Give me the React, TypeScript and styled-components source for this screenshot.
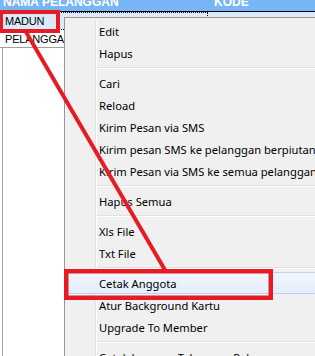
import React from 'react';
import styled, { createGlobalStyle } from 'styled-components';

const GlobalStyle = createGlobalStyle`
  html, body {
    margin: 0;
    padding: 0;
    background: #ffffff;
    overflow: hidden;
  }
`;

type MenuEntry = { kind: 'item'; label: string; active?: boolean } | { kind: 'sep' };

const menuEntries: MenuEntry[] = [
  { kind: 'item', label: 'Edit' },
  { kind: 'item', label: 'Hapus' },
  { kind: 'sep' },
  { kind: 'item', label: 'Cari' },
  { kind: 'item', label: 'Reload' },
  { kind: 'item', label: 'Kirim Pesan via SMS' },
  { kind: 'item', label: 'Kirim pesan SMS ke pelanggan berpiutang' },
  { kind: 'item', label: 'Kirim Pesan via SMS ke semua pelanggan' },
  { kind: 'sep' },
  { kind: 'item', label: 'Hapus Semua' },
  { kind: 'sep' },
  { kind: 'item', label: 'Xls File' },
  { kind: 'item', label: 'Txt File' },
  { kind: 'sep' },
  { kind: 'item', label: 'Cetak Anggota', active: true },
  { kind: 'item', label: 'Atur Background Kartu' },
  { kind: 'item', label: 'Upgrade To Member' },
  { kind: 'sep' },
  { kind: 'item', label: 'Cetak Laporan Tabungan Pelanggan' },
];

const Screen = styled.div`
  position: relative;
  width: 315px;
  height: 356px;
  overflow: hidden;
  display: flex;
  flex-direction: column;
  font-family: 'Liberation Sans', Arial, sans-serif;
`;

const Header = styled.div`
  display: flex;
  align-items: flex-start;
  height: 11px;
  overflow: hidden;
  background: #78b5f5;
  border-bottom: 1px solid #000000;
`;

const HeaderCell = styled.div<{ $width?: number }>`
  flex: ${({ $width }) => ($width ? `0 0 ${$width}px` : '1')};
  margin-top: -3px;
  padding-left: 3px;
  color: #ffffff;
  font-size: 12px;
  font-weight: bold;
  line-height: 11px;
  white-space: nowrap;
`;

const Row = styled.div<{ $selected?: boolean; $height: number }>`
  display: flex;
  height: ${({ $height }) => $height}px;
  background: ${({ $selected }) => ($selected ? '#dce9f9' : '#ffffff')};
`;

const LastRow = styled(Row)`
  border-bottom: 1px solid #a0a0a0;
`;

const Cell = styled.div<{ $width?: number; $focused?: boolean }>`
  flex: ${({ $width }) => ($width ? `0 0 ${$width}px` : '1')};
  box-sizing: border-box;
  padding-left: 5px;
  font-size: 11px;
  letter-spacing: -0.2px;
  line-height: 18px;
  color: #000000;
  white-space: nowrap;
  overflow: hidden;
  outline: ${({ $focused }) => ($focused ? '1px dotted #000000' : 'none')};
  outline-offset: -1px;
`;

const EmptyArea = styled.div`
  flex: 1;
  margin-left: 2px;
  border-left: 1px solid #a0a0a0;
`;

const Menu = styled.div`
  position: absolute;
  left: 64px;
  top: 17px;
  width: 300px;
  height: 380px;
  padding: 2px;
  background: #f0f0f0;
  border: 1px solid #979797;
  font-family: 'Noto Sans', 'Open Sans', sans-serif;
  font-size: 11.2px;
  color: #000000;

  &::before {
    content: '';
    position: absolute;
    left: 30px;
    top: 2px;
    bottom: 0;
    width: 1px;
    background: #e2e3e3;
    border-right: 1px solid #ffffff;
  }
`;

const MenuItem = styled.div<{ $active?: boolean }>`
  position: relative;
  height: 22px;
  box-sizing: border-box;
  line-height: ${({ $active }) => ($active ? '21px' : '23px')};
  white-space: nowrap;
  border: ${({ $active }) => ($active ? '1px solid #b9d4f4' : '0')};
  border-radius: 3px;
  padding-left: ${({ $active }) => ($active ? '31px' : '32px')};
  background: ${({ $active }) =>
    $active ? 'linear-gradient(#f1f6fd, #e4eefa)' : 'transparent'};
`;

const Separator = styled.div`
  height: 8px;
  margin-left: 30px;
  display: flex;
  flex-direction: column;
  justify-content: center;

  &::after {
    content: '';
    display: block;
    height: 1px;
    background: #e0e0e0;
    border-bottom: 1px solid #ffffff;
  }
`;

const Annotation = styled.svg`
  position: absolute;
  left: 0;
  top: 0;
  pointer-events: none;
`;

const RED = '#e51c24';

export default function App() {
  return (
    <>
      <GlobalStyle />
      <Screen>
        <Header>
          <HeaderCell $width={208}>NAMA PELANGGAN</HeaderCell>
          <HeaderCell>KODE</HeaderCell>
        </Header>
        <Row $selected $height={18}>
          <Cell $width={208} $focused>MADUN</Cell>
          <Cell>TT01</Cell>
        </Row>
        <LastRow $height={17}>
          <Cell $width={208}>PELANGGAN</Cell>
          <Cell />
        </LastRow>
        <EmptyArea />

        <Menu>
          {menuEntries.map((entry, i) =>
            entry.kind === 'sep' ? (
              <Separator key={i} />
            ) : (
              <MenuItem key={i} $active={entry.active}>
                {entry.label}
              </MenuItem>
            )
          )}
        </Menu>

        <Annotation width={315} height={356} viewBox="0 0 315 356">
          <rect x={1} y={12} width={57} height={19} fill="none" stroke={RED} strokeWidth={4} />
          <line x1={26} y1={32} x2={165} y2={270} stroke={RED} strokeWidth={4} />
          <rect x={66.25} y={271.25} width={204.5} height={26.5} fill="none" stroke={RED} strokeWidth={4.5} />
        </Annotation>
      </Screen>
    </>
  );
}
